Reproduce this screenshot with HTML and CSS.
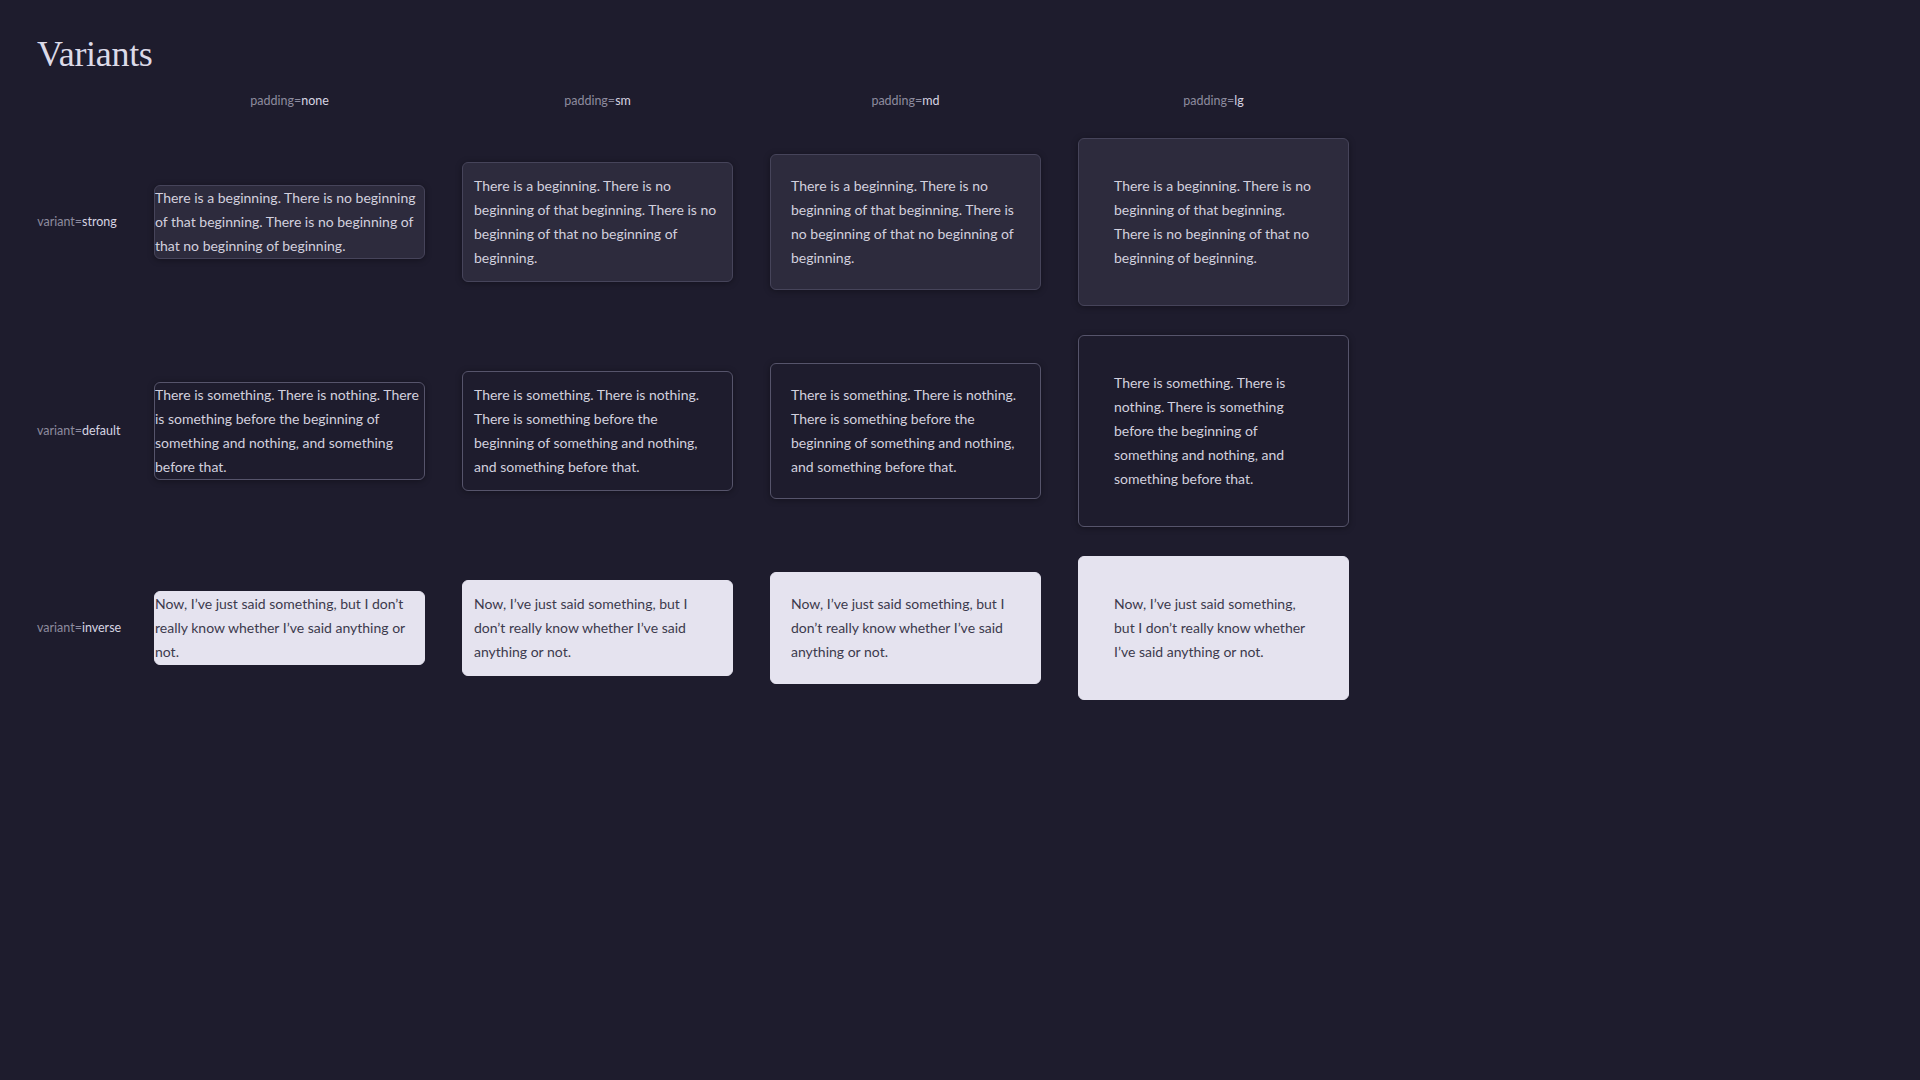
FILE: index.html
```html
<!DOCTYPE html>
<html lang="en">
<head>
<meta charset="utf-8">
<title>Variants</title>
<link rel="stylesheet" href="styles.css">
</head>
<body>
<main class="page">
  <h1 class="title">Variants</h1>
  <div class="grid">
    <div class="corner"></div>
    <div class="col-head"><span class="key">padding=</span><span class="val">none</span></div>
    <div class="col-head"><span class="key">padding=</span><span class="val">sm</span></div>
    <div class="col-head"><span class="key">padding=</span><span class="val">md</span></div>
    <div class="col-head"><span class="key">padding=</span><span class="val">lg</span></div>

    <div class="row-head"><span class="key">variant=</span><span class="val">strong</span></div>
    <div class="card strong p-none">There is a beginning. There is no beginning of that beginning. There is no beginning of that no beginning of beginning.</div>
    <div class="card strong p-sm">There is a beginning. There is no beginning of that beginning. There is no beginning of that no beginning of beginning.</div>
    <div class="card strong p-md">There is a beginning. There is no beginning of that beginning. There is no beginning of that no beginning of beginning.</div>
    <div class="card strong p-lg">There is a beginning. There is no beginning of that beginning. There is no beginning of that no beginning of beginning.</div>

    <div class="row-head"><span class="key">variant=</span><span class="val">default</span></div>
    <div class="card default p-none">There is something. There is nothing. There is something before the beginning of something and nothing, and something before that.</div>
    <div class="card default p-sm">There is something. There is nothing. There is something before the beginning of something and nothing, and something before that.</div>
    <div class="card default p-md">There is something. There is nothing. There is something before the beginning of something and nothing, and something before that.</div>
    <div class="card default p-lg">There is something. There is nothing. There is something before the beginning of something and nothing, and something before that.</div>

    <div class="row-head"><span class="key">variant=</span><span class="val">inverse</span></div>
    <div class="card inverse p-none">Now, I’ve just said something, but I don’t really know whether I’ve said anything or not.</div>
    <div class="card inverse p-sm">Now, I’ve just said something, but I don’t really know whether I’ve said anything or not.</div>
    <div class="card inverse p-md">Now, I’ve just said something, but I don’t really know whether I’ve said anything or not.</div>
    <div class="card inverse p-lg">Now, I’ve just said something, but I don’t really know whether I’ve said anything or not.</div>
  </div>
</main>
</body>
</html>
```
FILE: styles.css
```css
html, body {
  margin: 0;
  padding: 0;
  background: #1e1c2d;
  height: 100%;
}

body {
  font-family: Lato, "Liberation Sans", sans-serif;
  color: #cfcddc;
}

.page {
  padding: 32px 37px;
}

.title {
  margin: 0 0 17px 0;
  font-family: "Liberation Serif", "DejaVu Serif", serif;
  font-weight: normal;
  font-size: 36px;
  line-height: 44px;
  color: #dcdae8;
  letter-spacing: -0.3px;
}

.grid {
  display: grid;
  grid-template-columns: 80px repeat(4, 271px);
  column-gap: 37px;
  row-gap: 29px;
  align-items: center;
}

.col-head,
.row-head {
  font-size: 12.5px;
  line-height: 16px;
  text-align: center;
  white-space: nowrap;
}

.key {
  color: #8d8b9e;
}

.val {
  color: #d6d4e2;
}

.card {
  font-size: 14px;
  line-height: 24px;
  border: 1px solid transparent;
  border-radius: 6px;
  box-sizing: border-box;
}

.strong {
  background: #2d2b3d;
  border-color: #46445a;
  box-shadow: 0 1px 6px rgba(0, 0, 0, 0.35);
  color: #d2d0de;
}

.default {
  background: #1e1c2d;
  border-color: #56546b;
  box-shadow: 0 1px 6px rgba(0, 0, 0, 0.35);
  color: #d2d0de;
}

.inverse {
  background: #e5e3ef;
  border-color: #e5e3ef;
  color: #3c3a4d;
}

.p-none { padding: 0; }
.p-sm { padding: 11px; }
.p-md { padding: 19px 20px; }
.p-lg { padding: 35px; }
```
